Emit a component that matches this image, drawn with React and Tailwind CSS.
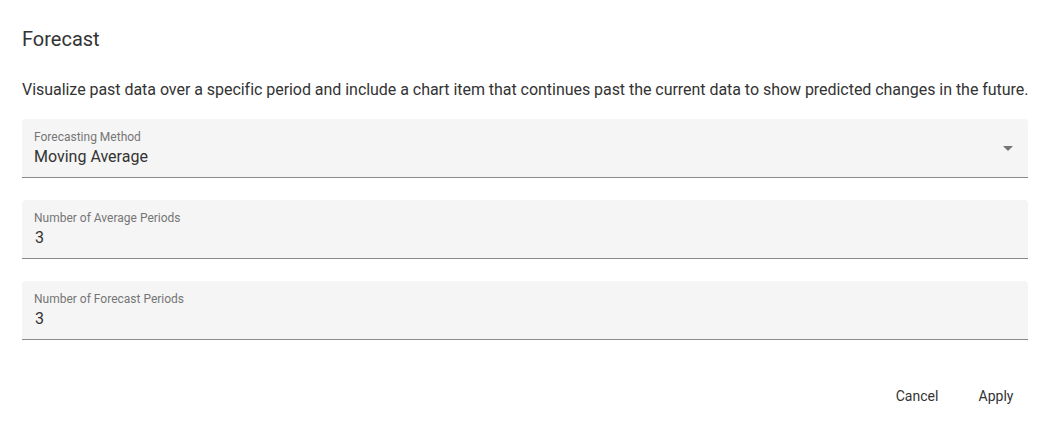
export default function App() {
  const fields = [
    { label: "Number of Average Periods", value: "3" },
    { label: "Number of Forecast Periods", value: "3" },
  ];

  return (
    <div className="w-[1052px] h-[427px] bg-white font-['Roboto','Liberation_Sans',sans-serif] text-[#333333]">
      <div className="px-[22px] pt-[25px]">
        {/* TITLE */}
        <h2 className="text-[20px] leading-[28px] font-normal">Forecast</h2>

        {/* DESCRIPTION */}
        <p className="mt-[25px] text-[16px] leading-[24px] tracking-[-0.04px] whitespace-nowrap">
          Visualize past data over a specific period and include a chart item that continues past the current data to show predicted changes in the future.
        </p>

        {/* FIELDS */}
        <div className="mt-[17px] w-[1006px] flex flex-col gap-[22px]">
          <div className="relative bg-[#f5f5f5] rounded-t-[4px] border-b border-[#8a8a8a] h-[59px] px-[12px] pt-[10px]">
            <div className="text-[12px] leading-[16px] text-[#757575]">Forecasting Method</div>
            <div className="text-[16px] leading-[24px]">Moving Average</div>
            <svg
              className="absolute right-[8px] top-[17px] w-[24px] h-[24px]"
              viewBox="0 0 24 24"
              fill="#757575"
            >
              <path d="M7 10l5 5 5-5z" />
            </svg>
          </div>

          {fields.map((f) => (
            <div
              key={f.label}
              className="bg-[#f5f5f5] rounded-t-[4px] border-b border-[#8a8a8a] h-[59px] px-[12px] pt-[10px]"
            >
              <div className="text-[12px] leading-[16px] text-[#757575]">{f.label}</div>
              <div className="text-[16px] leading-[24px] pl-[1px]">{f.value}</div>
            </div>
          ))}
        </div>

        {/* ACTIONS */}
        <div className="w-[1006px] flex justify-end gap-[15px] mt-[38px]">
          <button className="min-w-[64px] h-[36px] px-[8px] text-[14px] text-[#333333] rounded">
            Cancel
          </button>
          <button className="min-w-[64px] h-[36px] px-[8px] text-[14px] text-[#333333] rounded">
            Apply
          </button>
        </div>
      </div>
    </div>
  );
}
